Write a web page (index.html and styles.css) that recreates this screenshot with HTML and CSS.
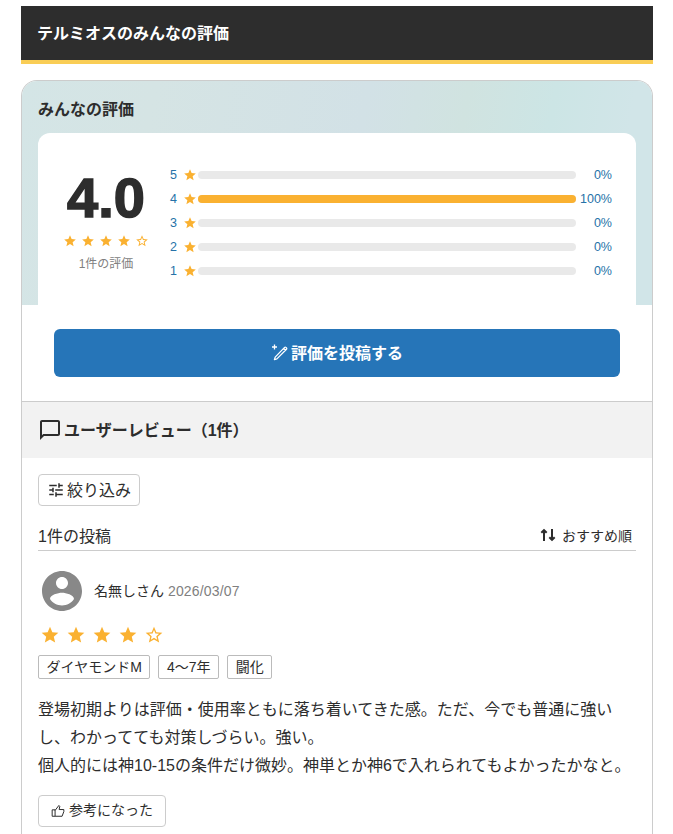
FILE: index.html
```
<!DOCTYPE html>
<html lang="ja">
<head>
  <meta charset="UTF-8" />
  <title>テルミオスのみんなの評価</title>
  <link rel="stylesheet" href="styles.css">
</head>
<body>
  <svg class="sprite" width="0" height="0">
    <symbol id="star" viewBox="0 0 24 24"><path d="M12 17.27 18.18 21l-1.64-7.03L22 9.24l-7.19-.61L12 2 9.19 8.63 2 9.24l5.46 4.73L5.82 21z"/></symbol>
    <symbol id="star-outline" viewBox="0 0 24 24"><path d="m22 9.24-7.19-.62L12 2 9.19 8.63 2 9.24l5.46 4.73L5.82 21 12 17.27 18.18 21l-1.63-7.03zM12 15.4l-3.76 2.27 1-4.28-3.32-2.88 4.38-.38L12 6.1l1.71 4.04 4.38.38-3.32 2.88 1 4.28z"/></symbol>
  </svg>

  <main class="page">
    <h2 class="page-title">テルミオスのみんなの評価</h2>

    <section class="card">
      <div class="summary">
        <h3 class="summary-title">みんなの評価</h3>
        <div class="summary-panel">
          <div class="score">
            <div class="score-number">4.0</div>
            <div class="score-stars">
              <svg><use href="#star"/></svg>
              <svg><use href="#star"/></svg>
              <svg><use href="#star"/></svg>
              <svg><use href="#star"/></svg>
              <svg><use href="#star-outline"/></svg>
            </div>
            <div class="score-count">1件の評価</div>
          </div>
          <div class="bars">
            <div class="bar-row"><span>5</span><svg><use href="#star"/></svg><div class="bar"></div><span class="percent">0%</span></div>
            <div class="bar-row"><span>4</span><svg><use href="#star"/></svg><div class="bar"><div class="bar-fill" style="width: 100%"></div></div><span class="percent">100%</span></div>
            <div class="bar-row"><span>3</span><svg><use href="#star"/></svg><div class="bar"></div><span class="percent">0%</span></div>
            <div class="bar-row"><span>2</span><svg><use href="#star"/></svg><div class="bar"></div><span class="percent">0%</span></div>
            <div class="bar-row"><span>1</span><svg><use href="#star"/></svg><div class="bar"></div><span class="percent">0%</span></div>
          </div>
        </div>
      </div>

      <div class="post-area">
        <button class="post-button">
          <svg class="pen-icon" viewBox="0 0 18 18" fill="none" stroke="currentColor" stroke-width="1.3" stroke-linejoin="round">
            <path d="M3.5 .5v5M1 3h5"/>
            <path d="M3.4 15.6l.8-2.5L13.6 3.4a.9.9 0 0 1 1.3 0l.6.6a.9.9 0 0 1 0 1.3L5.900 14.900zM12.800 4.500l1.700 1.700"/>
          </svg>
          <span>評価を投稿する</span>
        </button>
      </div>

      <div class="review-header">
        <svg class="chat-icon" viewBox="0 0 24 24"><path d="M20 2H4c-1.1 0-2 .9-2 2v18l4-4h14c1.1 0 2-.9 2-2V4c0-1.1-.9-2-2-2m0 14H5.2L4 17.2V4h16z"/></svg>
        <h3>ユーザーレビュー（1件）</h3>
      </div>

      <div class="reviews">
        <button class="filter-button">
          <svg viewBox="0 0 24 24"><path d="M3 17v2h6v-2zM3 5v2h10V5zm10 16v-2h8v-2h-8v-2h-2v6zM7 9v2H3v2h4v2h2V9zm14 4v-2H11v2zm-6-4h2V7h4V5h-4V3h-2z"/></svg>
          <span>絞り込み</span>
        </button>

        <div class="list-header">
          <span>1件の投稿</span>
          <span class="sort">
            <svg viewBox="0 0 16 14" fill="none" stroke="currentColor" stroke-width="2"><path d="M4 13V2.500M1.300 4.800l2.700-2.600 2.700 2.600M12 1v10.500M9.300 9.200l2.700 2.600 2.700-2.600"/></svg>
            <span>おすすめ順</span>
          </span>
        </div>

        <article class="review">
          <div class="user">
            <svg class="avatar" viewBox="0 0 24 24"><path d="M12 2C6.48 2 2 6.48 2 12s4.48 10 10 10 10-4.48 10-10S17.52 2 12 2m0 3c1.66 0 3 1.34 3 3s-1.34 3-3 3-3-1.34-3-3 1.34-3 3-3m0 14.2c-2.5 0-4.71-1.28-6-3.22.03-1.99 4-3.08 6-3.08 1.99 0 5.97 1.09 6 3.08-1.29 1.94-3.5 3.22-6 3.22"/></svg>
            <span>名無しさん</span>
            <time>2026/03/07</time>
          </div>
          <div class="review-stars">
            <svg><use href="#star"/></svg>
            <svg><use href="#star"/></svg>
            <svg><use href="#star"/></svg>
            <svg><use href="#star"/></svg>
            <svg><use href="#star-outline"/></svg>
          </div>
          <div class="tags">
            <span>ダイヤモンドM</span>
            <span>4〜7年</span>
            <span>闘化</span>
          </div>
          <p class="review-text">登場初期よりは評価・使用率ともに落ち着いてきた感。ただ、今でも普通に強いし、わかってても対策しづらい。強い。<br>個人的には神10-15の条件だけ微妙。神単とか神6で入れられてもよかったかなと。</p>
          <button class="like-button">
            <svg viewBox="0 0 24 24" fill="none" stroke="currentColor" stroke-width="1.7" stroke-linejoin="round"><path d="M2 10h5v11H2zM7 11l6.5-8.5L15 4l-1 5.5h8V13l-3 8H7"/></svg>
            <span>参考になった</span>
          </button>
        </article>
      </div>
    </section>
  </main>
</body>
</html>
```
FILE: styles.css
```
* {
  box-sizing: border-box;
}
body {
  margin: 0;
  background: #fff;
  color: #2d2d2d;
  font-family: "Liberation Sans", "Noto Sans CJK JP", sans-serif;
  font-size: 16px;
}
svg {
  display: block;
  flex-shrink: 0;
  fill: currentColor;
}
svg[fill="none"] {
  fill: none;
}
.sprite {
  display: none;
}
button {
  font-family: inherit;
  color: inherit;
  cursor: pointer;
}
h2, h3, p {
  margin: 0;
  font-size: 16px;
}
.page {
  display: flex;
  flex-direction: column;
  width: 632px;
  min-height: 100vh;
  margin-left: 21px;
  padding-top: 6px;
}
.page-title {
  height: 58px;
  padding: 1px 0 0 16px;
  background: #2d2d2d;
  border-bottom: 4px solid #f9cd55;
  color: #fff;
  line-height: 54px;
}

/* rating summary */
.card {
  flex: 1;
  margin-top: 16px;
  border: 1px solid #ccc;
  border-bottom: 0;
  border-radius: 16px 16px 0 0;
  overflow: hidden;
}
.summary {
  height: 224px;
  padding: 0 16px;
  background: linear-gradient(100deg, #d4e5e6 0%, #d5e4e4 20%, #d2e1e6 52%, #d0e3e0 67%, #cce5e5 80%, #d1e5e8 92%);
}
.summary-title {
  line-height: 24px;
  padding: 17px 0 11px;
}
.summary-panel {
  display: flex;
  height: 172px;
  background: #fff;
  border-radius: 12px 12px 0 0;
}
.score {
  width: 136px;
  padding-top: 37px;
  text-align: center;
}
.score-number {
  font-size: 56px;
  font-weight: bold;
  line-height: 56px;
  -webkit-text-stroke: 1.5px #2d2d2d;
}
.score-stars {
  display: flex;
  justify-content: center;
  gap: 4px;
  margin-top: 8px;
  color: #fab131;
}
.score-stars svg, .bar-row svg {
  width: 14px;
  height: 14px;
}
.score-count {
  margin-top: 8px;
  color: #808080;
  font-size: 12px;
  line-height: 16px;
}
.bars {
  flex: 1;
  padding: 30px 24px 0 0;
}
.bar-row {
  display: flex;
  align-items: center;
  height: 24px;
  color: #2672a8;
  font-size: 12.5px;
}
.bar-row > span {
  line-height: 16px;
}
.bar-row > span:first-child {
  width: 9px;
  margin-left: -4px;
}
.bar-row svg {
  margin: 0 1px 0 4px;
  color: #fab131;
}
.bar {
  flex: 1;
  height: 8px;
  background: #e9e9e9;
  border-radius: 4px;
}
.bar-fill {
  height: 8px;
  background: #fab131;
  border-radius: 4px;
}
.percent {
  width: 36px;
  text-align: right;
}
.post-area {
  padding: 24px 32px;
}
.post-button {
  display: flex;
  align-items: center;
  justify-content: center;
  gap: 2px;
  width: 100%;
  height: 48px;
  padding: 0 6px 2px;
  background: #2675b8;
  border: 0;
  border-radius: 6px;
  color: #fff;
  font-size: 16px;
  font-weight: bold;
}
.pen-icon {
  width: 18px;
  height: 18px;
  margin-top: 2px;
}

/* user reviews */
.review-header {
  display: flex;
  align-items: center;
  height: 57px;
  padding-left: 16px;
  background: #f2f2f2;
  border-top: 1px solid #ccc;
}
.review-header h3 {
  padding-bottom: 2px;
}
.chat-icon {
  width: 24px;
  height: 24px;
  margin-right: 2px;
}
.reviews {
  padding: 16px 16px 0;
}
.filter-button, .like-button {
  display: flex;
  align-items: center;
  height: 32px;
  background: #fff;
  border: 1px solid #ccc;
  border-radius: 4px;
}
.filter-button {
  width: 102px;
  padding: 0 8px;
  gap: 2px;
  font-size: 16px;
}
.filter-button span {
  padding-bottom: 2px;
}
.filter-button svg {
  width: 18px;
  height: 18px;
}
.list-header {
  display: flex;
  align-items: center;
  justify-content: space-between;
  height: 29px;
  margin-top: 16px;
  padding-right: 4px;
  border-bottom: 1px solid #ccc;
}
.list-header > span {
  padding-bottom: 2px;
}
.sort {
  display: flex;
  align-items: center;
  gap: 6px;
  font-size: 14px;
}
.sort svg {
  width: 16px;
  height: 14px;
}
.user {
  display: flex;
  align-items: center;
  margin-top: 16px;
  font-size: 14px;
}
.user span, .user time {
  padding-bottom: 2px;
}
.user time {
  margin-left: 4px;
  padding-bottom: 0;
  color: #808080;
  letter-spacing: 0.15px;
}
.avatar {
  width: 48px;
  height: 48px;
  margin-right: 8px;
  color: #888;
}
.review-stars {
  display: flex;
  gap: 6px;
  margin-top: 10px;
  padding-left: 2px;
  color: #fab131;
}
.review-stars svg {
  width: 20px;
  height: 20px;
}
.tags {
  display: flex;
  gap: 8px;
  margin-top: 10px;
}
.tags span {
  height: 24px;
  padding: 0 7.6px;
  border: 1px solid #bbb;
  border-radius: 2px;
  font-size: 14px;
  line-height: 22px;
}
.review-text {
  margin-top: 17px;
  line-height: 28px;
}
.like-button {
  width: 128px;
  margin-top: 15px;
  padding: 0 12px;
  gap: 4px;
  font-size: 14px;
}
.like-button span {
  padding-bottom: 4px;
}
.like-button svg {
  width: 14px;
  height: 14px;
}
```
